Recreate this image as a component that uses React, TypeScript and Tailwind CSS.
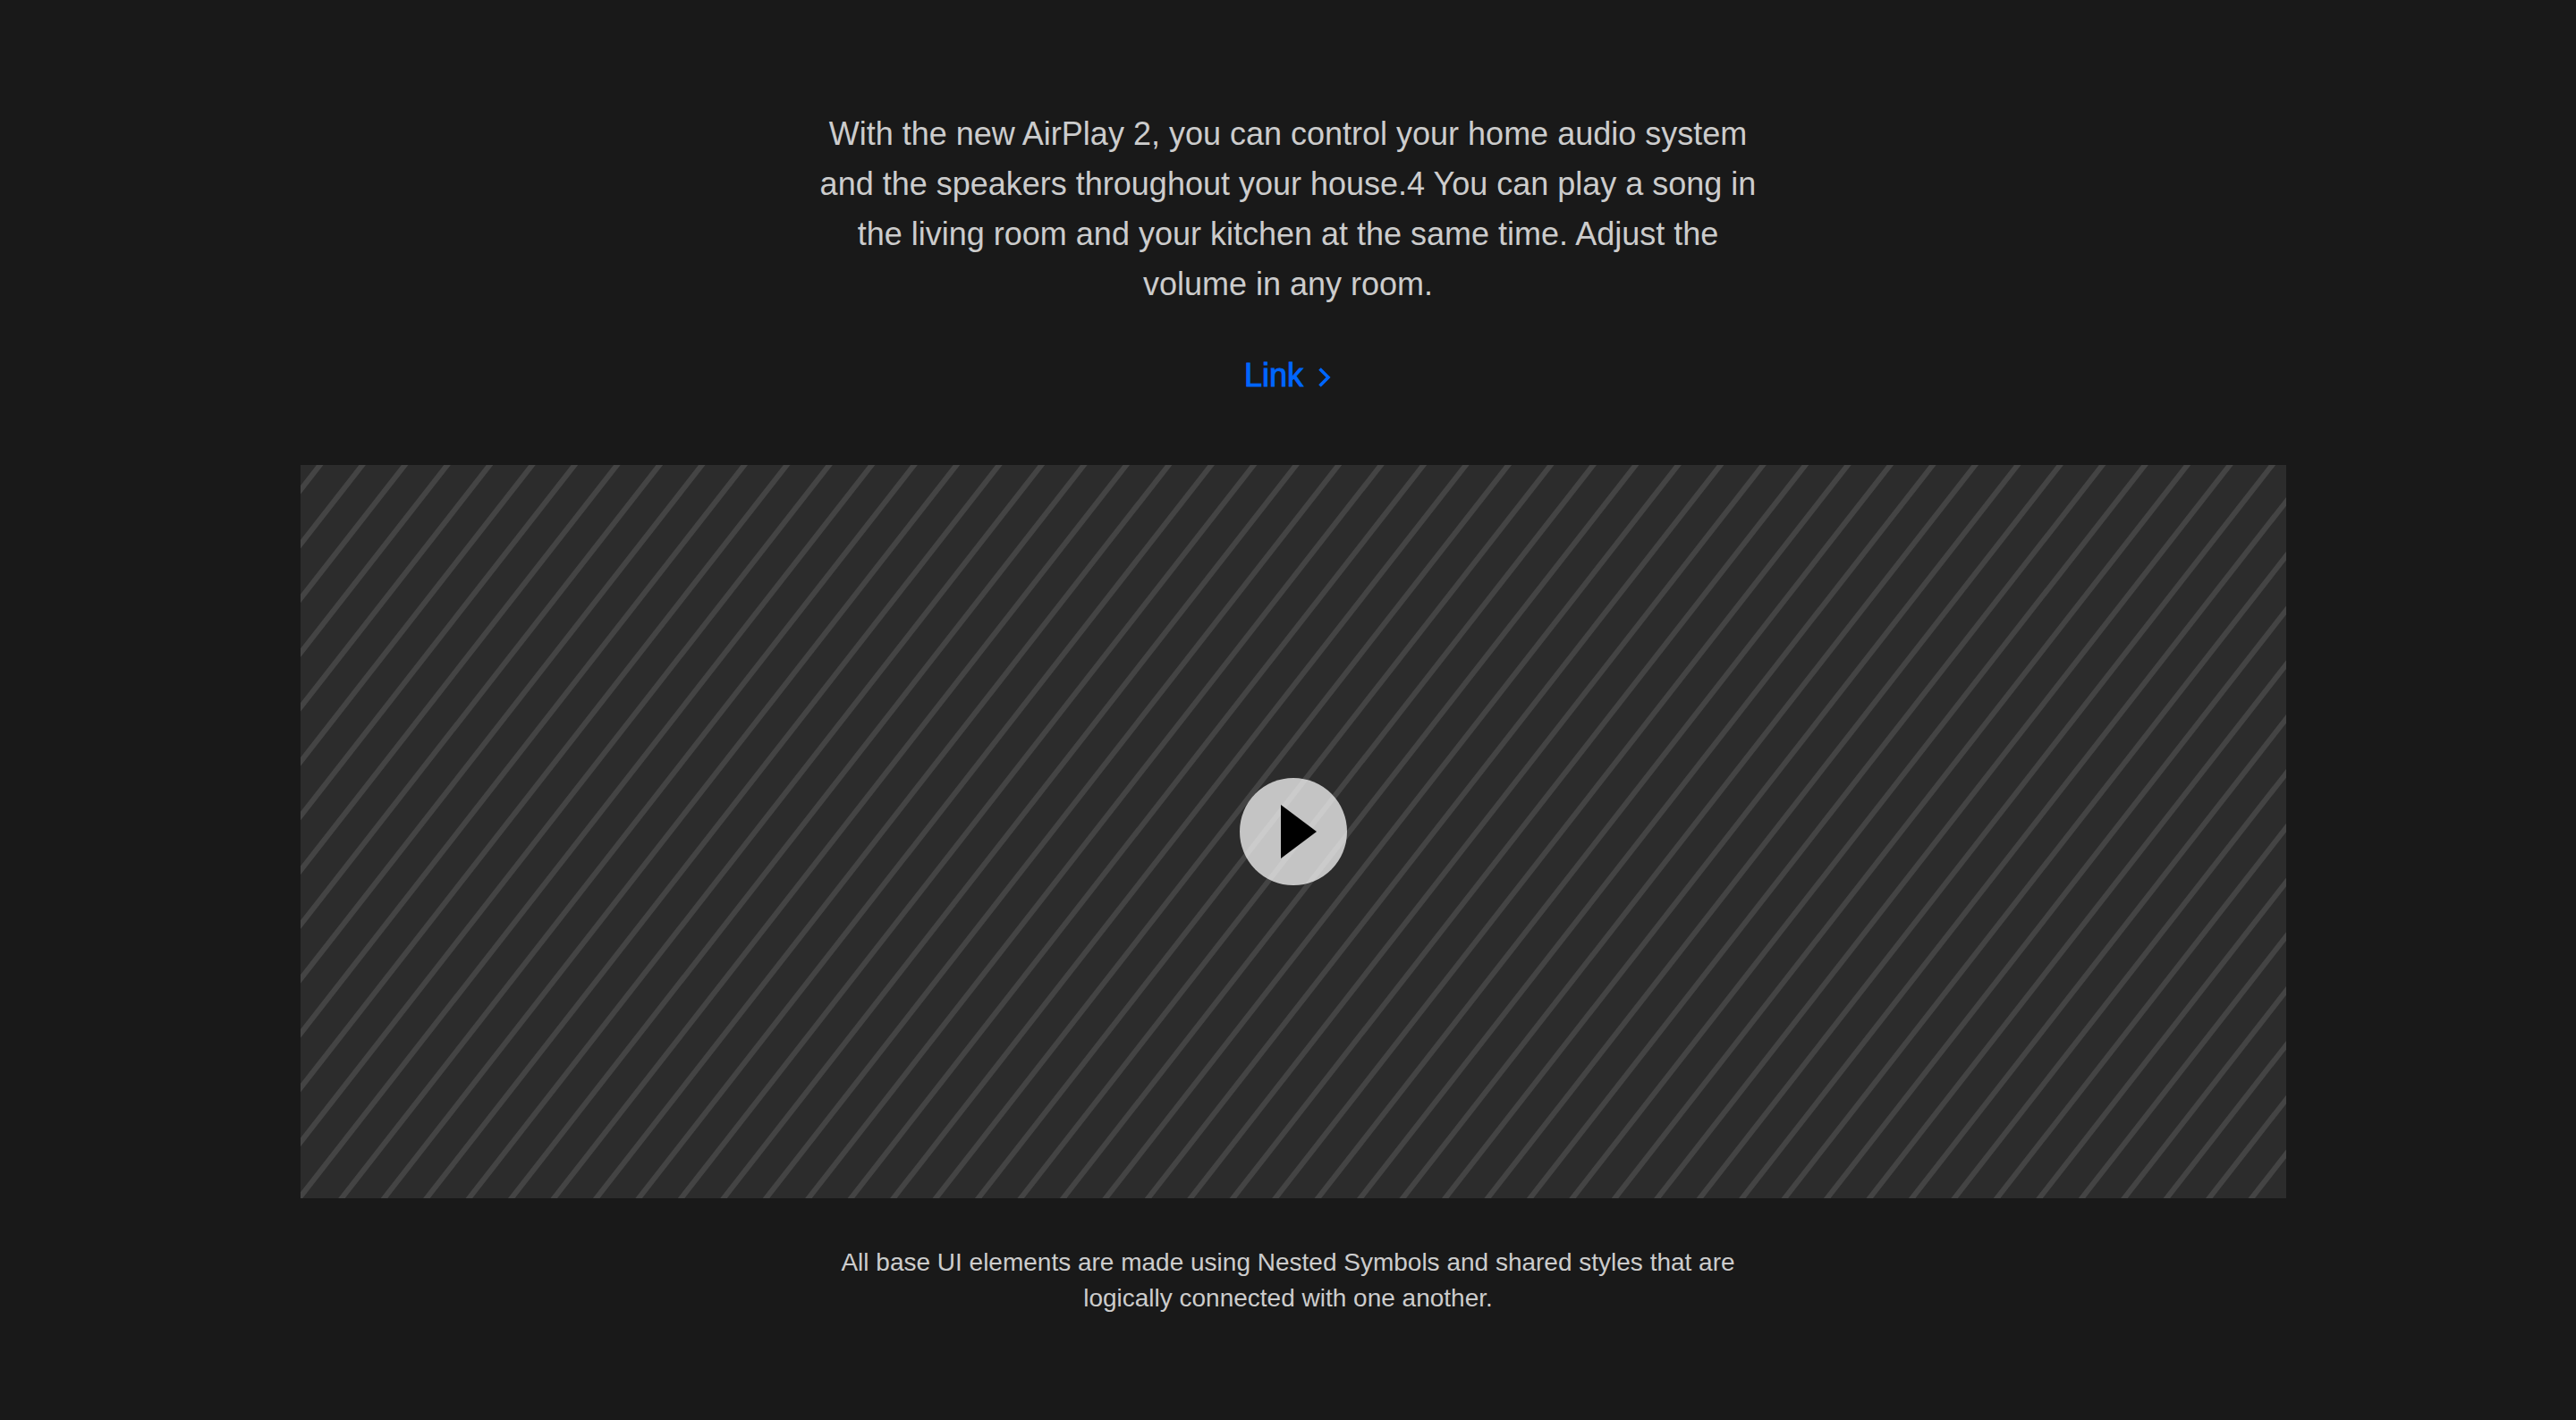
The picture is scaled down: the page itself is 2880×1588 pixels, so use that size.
const SPACING = 47.45;
const FIRST = 21.7;
const HEIGHT = 820;
const SLANT = 640;

const stripes = Array.from({ length: 76 }, (_, k) => {
  const x = FIRST + SPACING * k;
  const over = 10;
  const dx = (over * SLANT) / HEIGHT;
  return `M${(x + dx).toFixed(2)} ${-over}L${(x - SLANT - dx).toFixed(2)} ${HEIGHT + over}`;
}).join("");

function VideoPlaceholder() {
  return (
    <div className="grid h-[820px] w-full place-items-center overflow-hidden bg-[#2c2c2c]">
      <svg aria-hidden="true" className="col-start-1 row-start-1 h-full w-full">
        <path d={stripes} fill="none" stroke="#444444" strokeWidth="6" />
      </svg>
      <button
        type="button"
        aria-label="Play video"
        className="col-start-1 row-start-1 size-[120px] rounded-full bg-white/72"
      >
        <svg aria-hidden="true" viewBox="0 0 120 120" className="size-full">
          <path d="M46 30L86 60L46 90Z" fill="#000000" />
        </svg>
      </button>
    </div>
  );
}

export default function App() {
  return (
    <main className="flex min-h-screen flex-col items-center bg-[#191919] pt-[122px] font-['Liberation_Sans',Arial,sans-serif] text-[#cccccc]">
      <p className="max-w-[1080px] text-center text-[36px] leading-[56px]">
        With the new AirPlay 2, you can control your home audio system and the
        speakers throughout your house.4 You can play a song in the living room
        and your kitchen at the same time. Adjust the volume in any room.
      </p>
      <a
        href="#link"
        className="mt-[46px] flex items-center gap-4 text-[36px] leading-[56px] text-[#0066ff]"
      >
        <span className="[-webkit-text-stroke:1px_#0066ff]">Link</span>
        <svg
          aria-hidden="true"
          viewBox="0 0 16 24"
          className="mt-1 h-6 w-4"
          fill="none"
          stroke="currentColor"
          strokeWidth="3.6"
        >
          <path d="M2.5 2.5L12 12L2.5 21.5" />
        </svg>
      </a>
      <figure className="mt-[72px] flex w-full flex-col items-center">
        <div className="w-full pr-[324px] pl-[336px]">
          <VideoPlaceholder />
        </div>
        <figcaption className="mt-[52px] max-w-[1080px] text-center text-[28px] leading-[40px]">
          All base UI elements are made using Nested Symbols and shared styles
          that are logically connected with one another.
        </figcaption>
      </figure>
    </main>
  );
}
